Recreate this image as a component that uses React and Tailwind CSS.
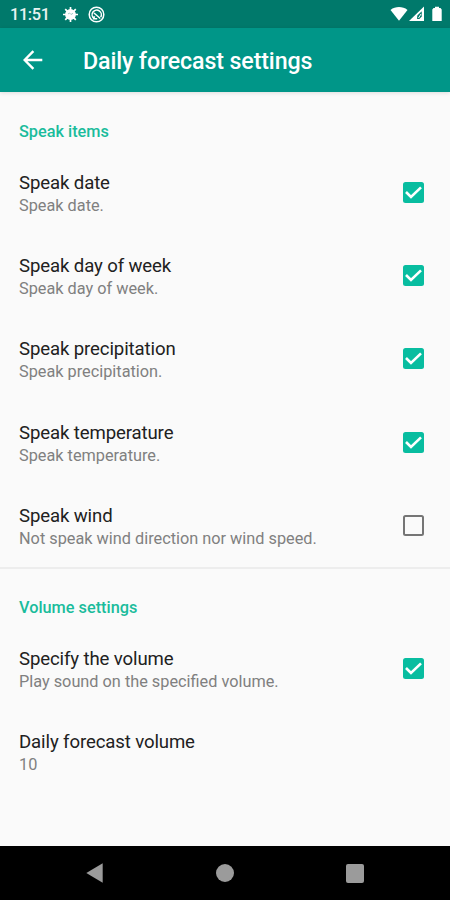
import React, { useState } from 'react'

const speakItems = [
  { id: 'date', title: 'Speak date', summary: 'Speak date.', checked: true },
  { id: 'day', title: 'Speak day of week', summary: 'Speak day of week.', checked: true },
  { id: 'precipitation', title: 'Speak precipitation', summary: 'Speak precipitation.', checked: true },
  { id: 'temperature', title: 'Speak temperature', summary: 'Speak temperature.', checked: true },
  { id: 'wind', title: 'Speak wind', summary: 'Not speak wind direction nor wind speed.', checked: false },
]

const volumeItems = [
  { id: 'volume', title: 'Specify the volume', summary: 'Play sound on the specified volume.', checked: true },
  { id: 'level', title: 'Daily forecast volume', summary: '10' },
]

function StatusBar() {
  return (
    <div className="flex h-7 shrink-0 items-center bg-[#00796b] pl-[10px] pr-[8px] text-white">
      <span className="w-[52px] pt-[3px] text-[16.3px] leading-none font-medium tracking-[-0.35px] text-[#e8f3f1]">11:51</span>
      <svg className="h-[17px] w-[17px]" viewBox="0 0 17 17" fill="none" stroke="currentColor">
        <circle cx="8.5" cy="8.5" r="5.4" fill="currentColor" stroke="none" />
        <path strokeWidth="1.7" d="M8.5 1v15M1 8.5h15M3.2 3.2l10.6 10.6M13.8 3.2L3.2 13.8" />
        <path stroke="#9fccc6" strokeWidth="1" d="M6 8l1.5-1 1.5 1.5L11 7.3" />
      </svg>
      <svg className="ml-[9px] h-[17px] w-[17px]" viewBox="0 0 17 17" fill="none" stroke="currentColor">
        <circle cx="8.5" cy="8.5" r="7.3" strokeWidth="1.5" />
        <path strokeWidth="1.5" d="M5.9 12.3a4.6 4.6 0 1 1 6.8-1.3M6 7l6.3 5.5M6.5 10.2l-.8 2.6h3.5" />
      </svg>
      <svg className="ml-auto h-[16px] w-[18px]" viewBox="0 0 18 16" fill="currentColor">
        <path d="M.5 3.9C5.5 .2 12.5 .2 17.5 3.9L9 14.7z" />
      </svg>
      <svg className="ml-[1px] h-[16px] w-[15px]" viewBox="0 0 15 16" fill="currentColor">
        <path d="M15 .5V15H0z" />
        <path fill="#00796b" d="M12.8 5.2L8.3 9.5l-.2 3.4 2.3.2 2.3-2.6z" />
        <path strokeWidth="1" stroke="currentColor" d="M9.5 12l2.5-4" />
      </svg>
      <svg className="ml-[8px] h-[16px] w-[10px]" viewBox="0 0 10 16" fill="currentColor">
        <path d="M3 .8h4V2h1.5L9.7 3.5V15H.3V3.5L1.5 2H3z" />
      </svg>
    </div>
  )
}

function AppBar() {
  return (
    <header className="z-10 flex h-16 shrink-0 items-center bg-[#009688] pl-[23px] text-white shadow-[0_1px_4px_rgba(0,0,0,0.12)]">
      <svg className="h-[20px] w-[20px]" viewBox="0 0 20 20" fill="none" stroke="currentColor" strokeWidth="2.4">
        <path d="M19.3 10H2.2M10.4 1.1L1.6 10l8.8 8.9" />
      </svg>
      <h1 className="ml-[40px] pt-[4px] text-[23.2px] leading-none font-medium tracking-[-0.12px]">Daily forecast settings</h1>
    </header>
  )
}

function Checkbox({ checked }) {
  if (!checked) {
    return <span className="mb-[1.5px] h-[21px] w-[21px] rounded-[2.5px] border-2 border-[#757575]" />
  }
  return (
    <span className="mb-[1.5px] h-[21px] w-[21px] rounded-[2.5px] bg-[#08bda0]">
      <svg className="h-[21px] w-[21px]" viewBox="0 0 21 21" fill="none" stroke="white" strokeWidth="2.6">
        <path d="M3 10l5 5L18 5.4" />
      </svg>
    </span>
  )
}

function Category({ children }) {
  return <h2 className="h-[59.5px] pl-[19px] pt-[30px] text-[16.3px] leading-[20px] font-medium text-[#1abc9c]">{children}</h2>
}

function Preference({ item, onToggle }) {
  const hasCheckbox = item.checked !== undefined
  return (
    <div className="flex h-[83.3px] items-center justify-between pl-[19px] pr-[26px]" onClick={() => hasCheckbox && onToggle(item.id)}>
      <div className="pt-[2px]">
        <div className="text-[18.6px] leading-[24px] tracking-[-0.12px] text-[#212121]">{item.title}</div>
        <div className="text-[16.3px] leading-[22.6px] text-[#808080]">{item.summary}</div>
      </div>
      {hasCheckbox && <Checkbox checked={item.checked} />}
    </div>
  )
}

function NavigationBar() {
  return (
    <nav className="flex h-[54px] shrink-0 items-center justify-between bg-black pl-[86px] pr-[86px] text-[#9b9b9b]">
      <svg className="h-[20px] w-[17px]" viewBox="0 0 17 20" fill="currentColor">
        <path d="M16.7.3v19.4L.3 10z" />
      </svg>
      <span className="h-[18px] w-[18px] rounded-full bg-[#9b9b9b]" />
      <span className="h-[19px] w-[18px] rounded-[2px] bg-[#9b9b9b]" />
    </nav>
  )
}

export default function App() {
  const [items, setItems] = useState([...speakItems, ...volumeItems])

  const handleToggle = (id) => {
    setItems(items.map((item) => (item.id === id ? { ...item, checked: !item.checked } : item)))
  }

  return (
    <div className="flex h-[900px] w-[450px] flex-col overflow-hidden bg-[#fafafa] font-['Roboto',sans-serif]">
      <StatusBar />
      <AppBar />
      <main className="min-h-0 flex-1">
        <section>
          <Category>Speak items</Category>
          {items.slice(0, 5).map((item) => (
            <Preference key={item.id} item={item} onToggle={handleToggle} />
          ))}
        </section>
        <section className="-mt-[0.8px] border-t-2 border-[#ededed]">
          <div className="-mt-[1.5px]">
            <Category>Volume settings</Category>
          </div>
          {items.slice(5).map((item) => (
            <Preference key={item.id} item={item} onToggle={handleToggle} />
          ))}
        </section>
      </main>
      <NavigationBar />
    </div>
  )
}
